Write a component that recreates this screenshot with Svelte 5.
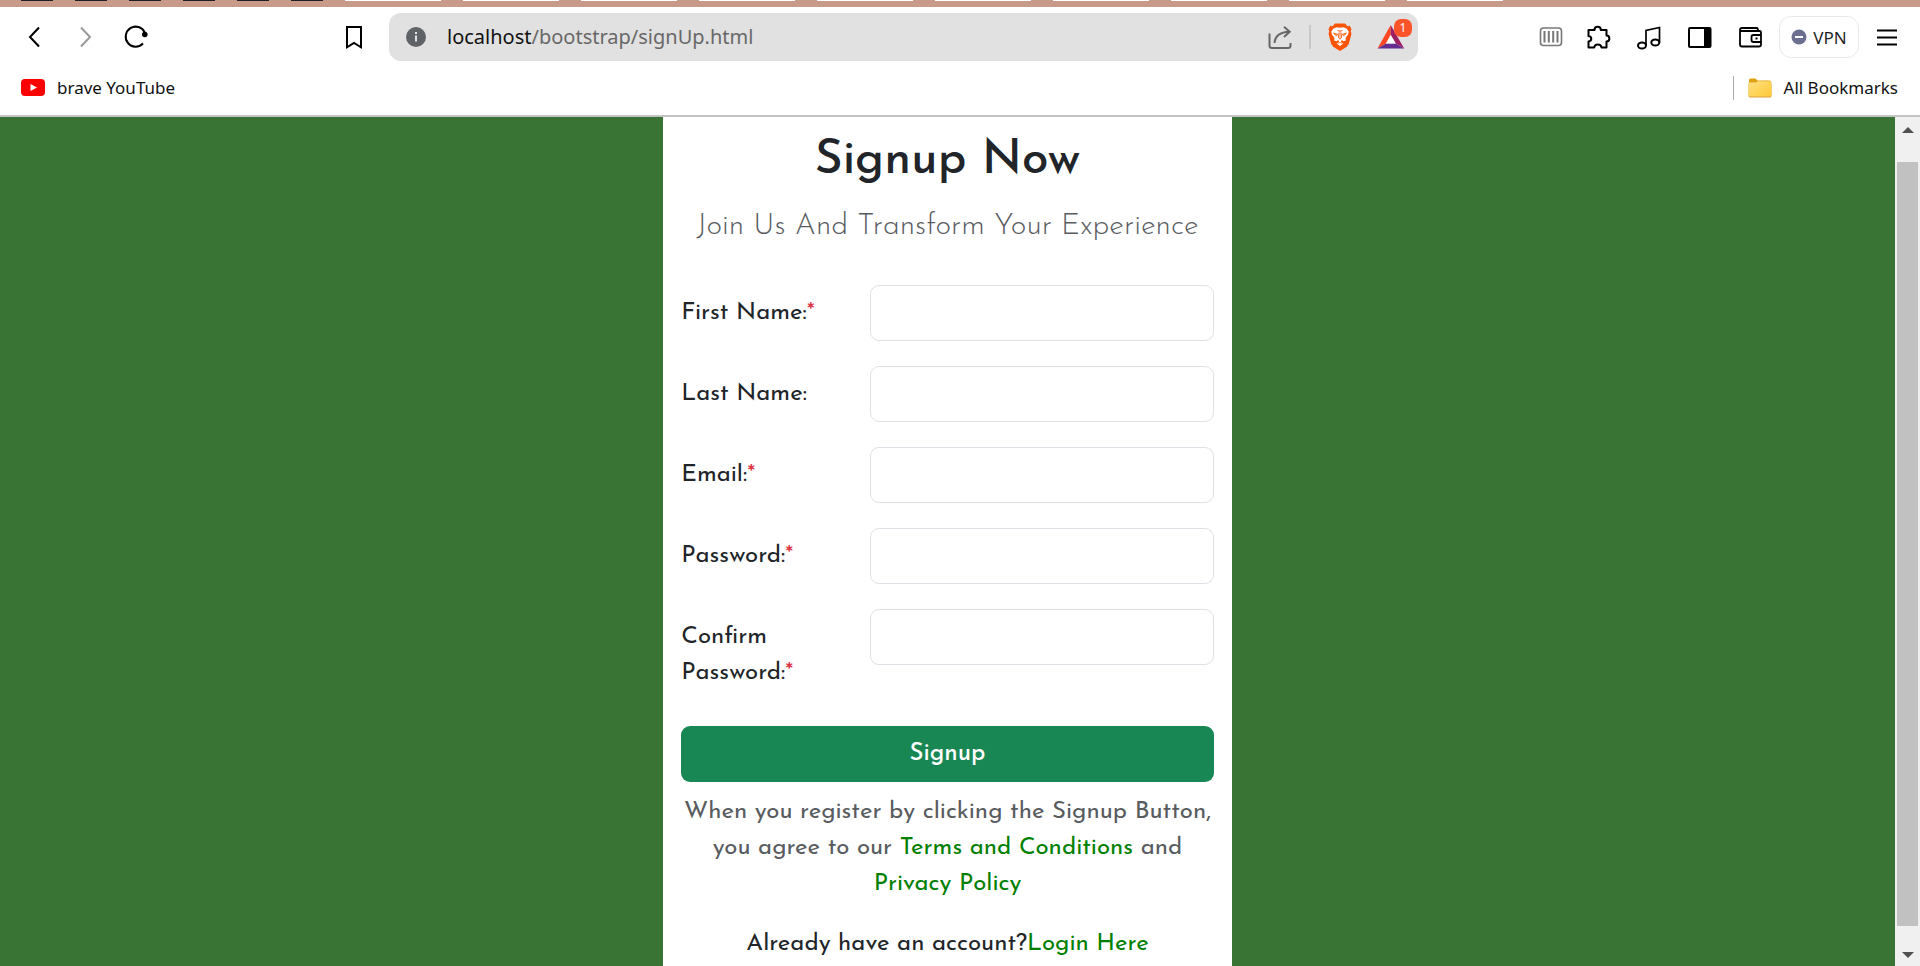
<script>
  const pinnedTabs = Array(6).fill(0);
  const openTabs = Array(10).fill(0);

  const fields = [
    { id: 'first-name', label: 'First Name:', type: 'text', required: true },
    { id: 'last-name', label: 'Last Name:', type: 'text', required: false },
    { id: 'email', label: 'Email:', type: 'email', required: true },
    { id: 'password', label: 'Password:', type: 'password', required: true },
    { id: 'confirm', label: 'Confirm Password:', type: 'password', required: true }
  ];
</script>

<div class="window">
  <header class="chrome">
    <div class="tabstrip">
      <div class="pinned">
        {#each pinnedTabs as _}<span></span>{/each}
      </div>
      <div class="tabs">
        {#each openTabs as _}<span></span>{/each}
      </div>
    </div>

    <div class="toolbar">
      <nav class="nav">
        <button class="icon" aria-label="Back">
          <svg viewBox="0 0 32 32"><path d="M21 6.5 12 16l9 9.5" stroke-width="2" /></svg>
        </button>
        <button class="icon dim" aria-label="Forward">
          <svg viewBox="0 0 32 32"><path d="M12 6.5 21 16l-9 9.5" stroke-width="2" /></svg>
        </button>
        <button class="icon" aria-label="Reload">
          <svg viewBox="0 0 32 32"><path d="M23 22.5A10 10 0 1 1 24.8 11.5" stroke-width="2" /><circle cx="24.8" cy="13.5" r="2.8" fill="currentColor" stroke="none" /></svg>
        </button>
        <button class="icon save" aria-label="Bookmark this page">
          <svg viewBox="0 0 32 32"><path d="M9 6H23V26.3L16 22 9 26.3Z" stroke-width="2" /></svg>
        </button>
      </nav>

      <div class="address">
        <svg class="info" viewBox="0 0 20 20"><circle cx="10" cy="10" r="10" fill="#5f6368" /><path d="M10 8.5v6M10 5v2" stroke="#e1e1e1" stroke-width="2" /></svg>
        <a class="url" href="#top"><b>localhost</b>/bootstrap/signUp.html</a>
        <div class="actions">
          <button class="share" aria-label="Share">
            <svg viewBox="0 0 24 24"><path d="M1.5 8.5V20.5a2.5 2.5 0 0 0 2.500 2.500H20a2.500 2.500 0 0 0 2.500-2.500V18M6.500 18C7 11.500 12 7 21.500 6.700M16 1.700l5.700 5L16 12" stroke-width="2" /></svg>
          </button>
          <i class="sep"></i>
          <button class="lion" aria-label="Brave Shields">
            <svg viewBox="0 0 24 28">
              <path d="M7 .5H17l2.500 2.700 2.300-.4 1.700 3.400-.8 2 .8 2.500-2.800 10.500L18.500 24 12 28 5.500 24 3.300 21.200.5 10.700l.8-2.500-.8-2 1.700-3.400 2.300.4Z" fill="#fb5407" stroke="none" />
              <path d="M12 4.800 15.500 4.300 18.500 5.500 20.800 8.600 20 11.500 17.500 15.300 17.900 17.500 15.500 18.200 13.800 17 12.900 18.800 15.300 20.400 12 23 8.700 20.400 11.100 18.800 10.200 17 8.500 18.200 6.100 17.500 6.500 15.300 4 11.500 3.200 8.600 5.500 5.500 8.500 4.300Z" fill="#fff" stroke="none" />
              <path d="M5.500 10.200 9.800 11.300 8.500 12.800ZM18.500 10.200 14.200 11.300 15.500 12.800ZM9.500 7.500 12 8.300 14.500 7.500M11 9.500 10.500 14.800 12 16.200 13.500 14.800 13 9.500" stroke="#fb5407" stroke-width=".9" fill="#fb5407" fill-rule="evenodd" fill-opacity=".3" />
              <path d="M9.800 20.400 12 19.400l2.200 1" stroke="#fb5407" stroke-width=".8" />
            </svg>
          </button>
          <button class="bat" aria-label="Brave Rewards">
            <svg viewBox="0 0 36 32">
              <path d="M21.700 4 8.500 27.500 17 22.500 21.700 14Z" fill="#ff4724" stroke="none" />
              <path d="M21.700 4 35.200 27.500 26.700 22.500 21.700 14Z" fill="#9e1f63" stroke="none" />
              <path d="M8.500 27.500H35.200L26.700 22.500H17Z" fill="#662d91" stroke="none" />
              <path d="M21.700 14 26.700 22.500H17Z" fill="#fff" stroke="none" />
            </svg>
            <span class="badge">1</span>
          </button>
        </div>
      </div>

      <div class="tools">
        <div class="extensions">
          <button class="icon narrow" aria-label="Reader">
            <svg viewBox="0 0 24 32"><rect x="1.500" y="7" width="21" height="17.500" rx="3" stroke="#777" stroke-width="1.600" /><path d="M5.500 10v11.500M9.800 10v11.500M14.200 10v11.500M18.500 10v11.500" stroke="#777" stroke-width="2" /></svg>
          </button>
          <button class="icon" aria-label="Extensions">
            <svg viewBox="0 0 32 32"><path d="M7 9H12.500C12.500 4.800 18.800 4.800 18.800 9H24.500V14.500C28.300 14.500 28.300 20.500 24.500 20.500V26.500H19.500C19 22.500 12.700 22.500 12.200 26.500H6.500V20.500C10.200 20 10.200 15.500 6.500 15V9Z" stroke-width="2" stroke-linejoin="round" /></svg>
          </button>
          <button class="icon" aria-label="Media">
            <svg viewBox="0 0 32 32"><ellipse cx="9" cy="24.500" rx="4" ry="3" stroke-width="2" /><ellipse cx="22.300" cy="21.500" rx="4" ry="3" stroke-width="2" /><path d="M13 24.500V9.500L26.500 6.500V21.500" stroke-width="1.700" /></svg>
          </button>
          <button class="icon" aria-label="Side panel">
            <svg viewBox="0 0 32 32"><rect x="5" y="7" width="21.500" height="19" rx="1" stroke-width="2" /><path d="M20 7h6.500v19H20Z" fill="currentColor" stroke="none" /></svg>
          </button>
          <button class="icon" aria-label="Wallet">
            <svg viewBox="0 0 32 32"><path d="M7 10H24.500Q26 10 26 11.500V23.500Q26 25.500 24 25.500H7Q5 25.500 5 23.500V9Q5 7 7 7H21.500Q23 7 23 9.500M5 9.500Q5.500 10 7 10M26 14H18.500Q16.500 14 16.500 16V19Q16.500 21 18.500 21H26M20.500 17.500h2" stroke-width="1.800" /></svg>
          </button>
        </div>
        <button class="vpn">
          <svg viewBox="0 0 16 16"><circle cx="8" cy="8" r="7.500" fill="#6b7090" stroke="none" /><path d="M4 8h8" stroke="#fff" stroke-width="2" /></svg>
          VPN
        </button>
        <button class="icon" aria-label="Menu">
          <svg viewBox="0 0 32 32"><path d="M6 9.500H26M6 16.500H26M6 23.500H26" stroke-width="1.800" /></svg>
        </button>
      </div>
    </div>

    <div class="bookmarks">
      <a href="#youtube">
        <svg class="yt" viewBox="0 0 24 17"><rect width="24" height="17" rx="4" fill="#f00" stroke="none" /><path d="M9.500 5 16 8.500 9.500 12Z" fill="#fff" stroke="none" /></svg>
        brave YouTube
      </a>
      <div class="all">
        <i class="sep"></i>
        <button>
          <svg class="folder" viewBox="0 0 24 20">
            <defs><linearGradient id="fold" x1="0" y1="0" x2="1" y2="1"><stop offset="0" stop-color="#ffe083" /><stop offset="1" stop-color="#fdc935" /></linearGradient></defs>
            <path d="M1 2Q1 .5 2.500.5H7.500L9.500 2.500H21.500Q23 2.500 23 4V10H1Z" fill="#dfa20c" stroke="none" />
            <rect x=".5" y="4" width="23" height="15.500" rx="1.500" fill="#d9a441" stroke="none" />
            <path d="M.5 5.500Q.5 4.500 2 4.500H8L10 3.200H22Q23.500 3.200 23.500 4.700V17Q23.500 18.500 22 18.500H2Q.5 18.500.5 17Z" fill="url(#fold)" stroke="none" />
          </svg>
          All Bookmarks
        </button>
      </div>
    </div>
  </header>

  <div class="viewport">
    <div class="page">
      <main class="card">
        <h1>Signup Now</h1>
        <p class="lead">Join Us And Transform Your Experience</p>
        <form onsubmit={(e) => e.preventDefault()}>
          {#each fields as f}
            <div class="row">
              <label for={f.id}>{f.label}{#if f.required}<span class="req">*</span>{/if}</label>
              <input id={f.id} type={f.type} />
            </div>
          {/each}
          <button class="submit">Signup</button>
        </form>
        <p class="terms">
          When you register by clicking the Signup Button, you agree to our
          <a href="#terms">Terms and Conditions</a> and <a href="#privacy">Privacy Policy</a>
        </p>
        <p class="login">Already have an account?<a href="#login">Login Here</a></p>
      </main>
    </div>
    <div class="scrollbar">
      <svg viewBox="0 0 12 6"><path d="M0 6 6 0l6 6Z" fill="#505050" stroke="none" /></svg>
      <span class="thumb"></span>
      <svg viewBox="0 0 12 6"><path d="M0 0H12L6 6Z" fill="#505050" stroke="none" /></svg>
    </div>
  </div>
</div>

<style>
  :global(body) {
    margin: 0;
  }
  .window,
  .window * {
    box-sizing: border-box;
  }
  .window {
    height: 100vh;
    display: flex;
    flex-direction: column;
    overflow: hidden;
    background: #fff;
    font-family: 'Noto Sans', 'Open Sans', sans-serif;
    color: #111;
  }
  button {
    font: inherit;
    color: inherit;
    background: none;
    border: 0;
    padding: 0;
    cursor: pointer;
  }
  a {
    text-decoration: none;
    color: inherit;
  }
  svg {
    display: block;
    fill: none;
    stroke: currentColor;
    flex: none;
  }

  .chrome {
    flex: none;
    padding-bottom: 7px;
    border-bottom: 2px solid #c3c3c3;
  }
  .tabstrip {
    height: 7px;
    background: #c79a8a;
    display: flex;
    gap: 22px;
    padding-left: 21px;
  }
  .pinned,
  .tabs {
    display: flex;
    gap: 22px;
  }
  .pinned span {
    width: 32px;
    height: 1px;
    background: #1c1c22;
  }
  .tabs span {
    width: 96px;
    height: 1px;
    background: #fff;
  }

  .toolbar {
    display: flex;
    align-items: center;
    height: 60px;
  }
  .nav {
    flex: 0 0 389px;
    display: flex;
    gap: 19px;
    padding: 0 19px 0 18px;
  }
  .icon {
    width: 32px;
    height: 32px;
    color: #000;
  }
  .icon svg {
    width: 100%;
    height: 100%;
  }
  .icon.dim {
    color: #999;
  }
  .icon.narrow {
    width: 24px;
  }
  .save {
    margin-left: auto;
  }

  .address {
    flex: 1;
    min-width: 0;
    height: 48px;
    display: flex;
    align-items: center;
    padding: 0 13px 0 17px;
    border-radius: 12px;
    background: #e1e1e1;
  }
  .info {
    width: 20px;
    height: 20px;
    stroke: none;
  }
  .url {
    margin-left: 21px;
    font-size: 20px;
    line-height: 28px;
    color: #686868;
  }
  .url b {
    font-weight: 400;
    color: #111;
  }
  .actions {
    margin-left: auto;
    display: flex;
    align-items: center;
    gap: 17px;
    color: #666;
  }
  .share svg {
    width: 24px;
    height: 24px;
  }
  .sep {
    width: 2px;
    height: 24px;
    background: #c8c8c8;
  }
  .lion svg {
    width: 24px;
    height: 28px;
  }
  .bat {
    position: relative;
  }
  .bat svg {
    width: 36px;
    height: 32px;
  }
  .badge {
    position: absolute;
    top: -2px;
    right: -7px;
    width: 18px;
    height: 18px;
    border-radius: 7px;
    background: #fb542b;
    color: #fff;
    font-size: 12px;
    line-height: 18px;
    text-align: center;
  }

  .tools {
    flex: 0 0 502px;
    display: flex;
    align-items: center;
    justify-content: flex-end;
    gap: 12px;
    padding-right: 17px;
  }
  .extensions {
    display: flex;
    gap: 19px;
  }
  .vpn {
    display: flex;
    align-items: center;
    justify-content: center;
    gap: 6px;
    width: 80px;
    height: 42px;
    border: 1px solid #e9e9ec;
    border-radius: 12px;
    font-size: 17px;
    color: #1d1f25;
  }
  .vpn svg {
    width: 16px;
    height: 16px;
  }

  .bookmarks {
    height: 41px;
    display: flex;
    align-items: center;
    justify-content: space-between;
    padding: 0 22px 0 21px;
    font-size: 17px;
  }
  .bookmarks a,
  .bookmarks button {
    display: flex;
    align-items: center;
    gap: 12px;
  }
  .yt {
    width: 24px;
    height: 17px;
  }
  .folder {
    width: 24px;
    height: 20px;
  }
  .all {
    display: flex;
    align-items: center;
    gap: 14px;
  }
  .all .sep {
    width: 1px;
    background: #aaa;
  }

  .viewport {
    flex: 1;
    min-height: 0;
    display: flex;
  }
  .page {
    flex: 1;
    display: flex;
    justify-content: center;
    background: #397435;
    overflow: hidden;
  }
  .card {
    width: 30%;
    padding: 15px 18px 0;
    background: #fff;
    font-family: 'Josefin Sans', Lato, sans-serif;
    font-size: 24px;
    line-height: 36px;
    color: #212529;
  }
  h1 {
    margin: 0;
    font-size: 48px;
    line-height: 58px;
    font-weight: 500;
    text-align: center;
  }
  .lead {
    margin: 19px 0 40px;
    font-size: 30px;
    font-weight: 300;
    text-align: center;
    white-space: nowrap;
    color: #595c5f;
  }
  form {
    display: flex;
    flex-direction: column;
    gap: 25px;
  }
  .row {
    display: grid;
    grid-template-columns: 1fr 2fr;
    gap: 17px;
    align-items: start;
  }
  label {
    padding: 10px 0 4px;
  }
  .req {
    color: #dc3545;
  }
  input {
    width: 100%;
    min-width: 0;
    height: 56px;
    padding: 7px 14px;
    border: 1px solid #dee2e6;
    border-radius: 9px;
    font: inherit;
    background: #fff;
  }
  .submit {
    height: 56px;
    margin-top: 6px;
    border-radius: 9px;
    background: #198754;
    color: #fff;
    font-weight: 500;
  }
  .terms {
    margin: 12px 0 24px;
    text-align: center;
    color: #595c5f;
  }
  .login {
    margin: 0;
    text-align: center;
  }
  .card a {
    color: #008000;
  }

  .scrollbar {
    width: 25px;
    display: flex;
    flex-direction: column;
    align-items: center;
    padding: 10px 2px 8px;
    background: #f0f0f0;
  }
  .scrollbar svg {
    width: 12px;
    height: 6px;
  }
  .thumb {
    flex: 1;
    width: 100%;
    margin: 29px 0 26px;
    background: #c1c1c1;
  }
</style>
